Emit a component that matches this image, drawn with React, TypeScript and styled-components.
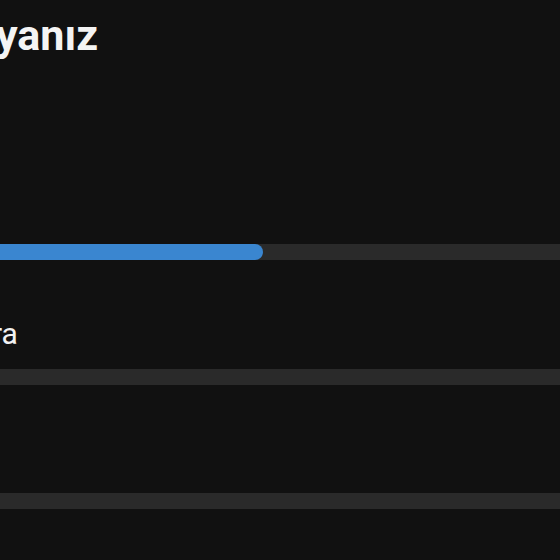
import React from 'react'
import styled, { createGlobalStyle } from 'styled-components'

const Global = createGlobalStyle`
  html, body {
    margin: 0;
    background: #111111;
    overflow: hidden;
  }
  body {
    font-family: Roboto, "Liberation Sans", sans-serif;
    color: #f2f2f2;
  }
`;

const Page = styled.div`
  width: 600px;
  margin-left: -20px;
  height: 560px;
  padding-top: 12px;
  box-sizing: border-box;
`;

const Title = styled.h1`
  margin: 0;
  font-size: 43px;
  font-weight: 700;
  line-height: 46px;
  color: #f4f4f4;
  padding-left: 16px;
`;

const Section = styled.div`
  display: flex;
  flex-direction: column;
`;

const Track = styled.div<{ $top: number }>`
  margin-top: ${p => p.$top}px;
  height: 16px;
  width: 100%;
  background: #2a2a2a;
  border-radius: 8px;
  overflow: hidden;
`;

const Fill = styled.div`
  height: 100%;
  background: #3a86d0;
  border-radius: 8px;
`;

const Label = styled.div`
  height: 28px;
  font-size: 30px;
  line-height: 28px;
  padding-left: 12px;
  color: #f2f2f2;
`;

const Row = styled.div<{ $gap: number }>`
  display: flex;
  flex-direction: column;
  margin-top: ${p => p.$gap}px;
`;

const Bar = styled.div`
  height: 16px;
  margin-top: 21px;
  background: #2a2a2a;
`;

export default function App() {
  const progress = 283;
  return (
    <>
      <Global />
      <Page>
        <Title>yanız</Title>
        <Section>
          <Track $top={186}>
            <Fill style={{ width: progress }} />
          </Track>
        </Section>
        <Row $gap={60}>
          <Label>ra</Label>
          <Bar />
        </Row>
        <Row $gap={59}>
          <Label></Label>
          <Bar />
        </Row>
      </Page>
    </>
  )
}
